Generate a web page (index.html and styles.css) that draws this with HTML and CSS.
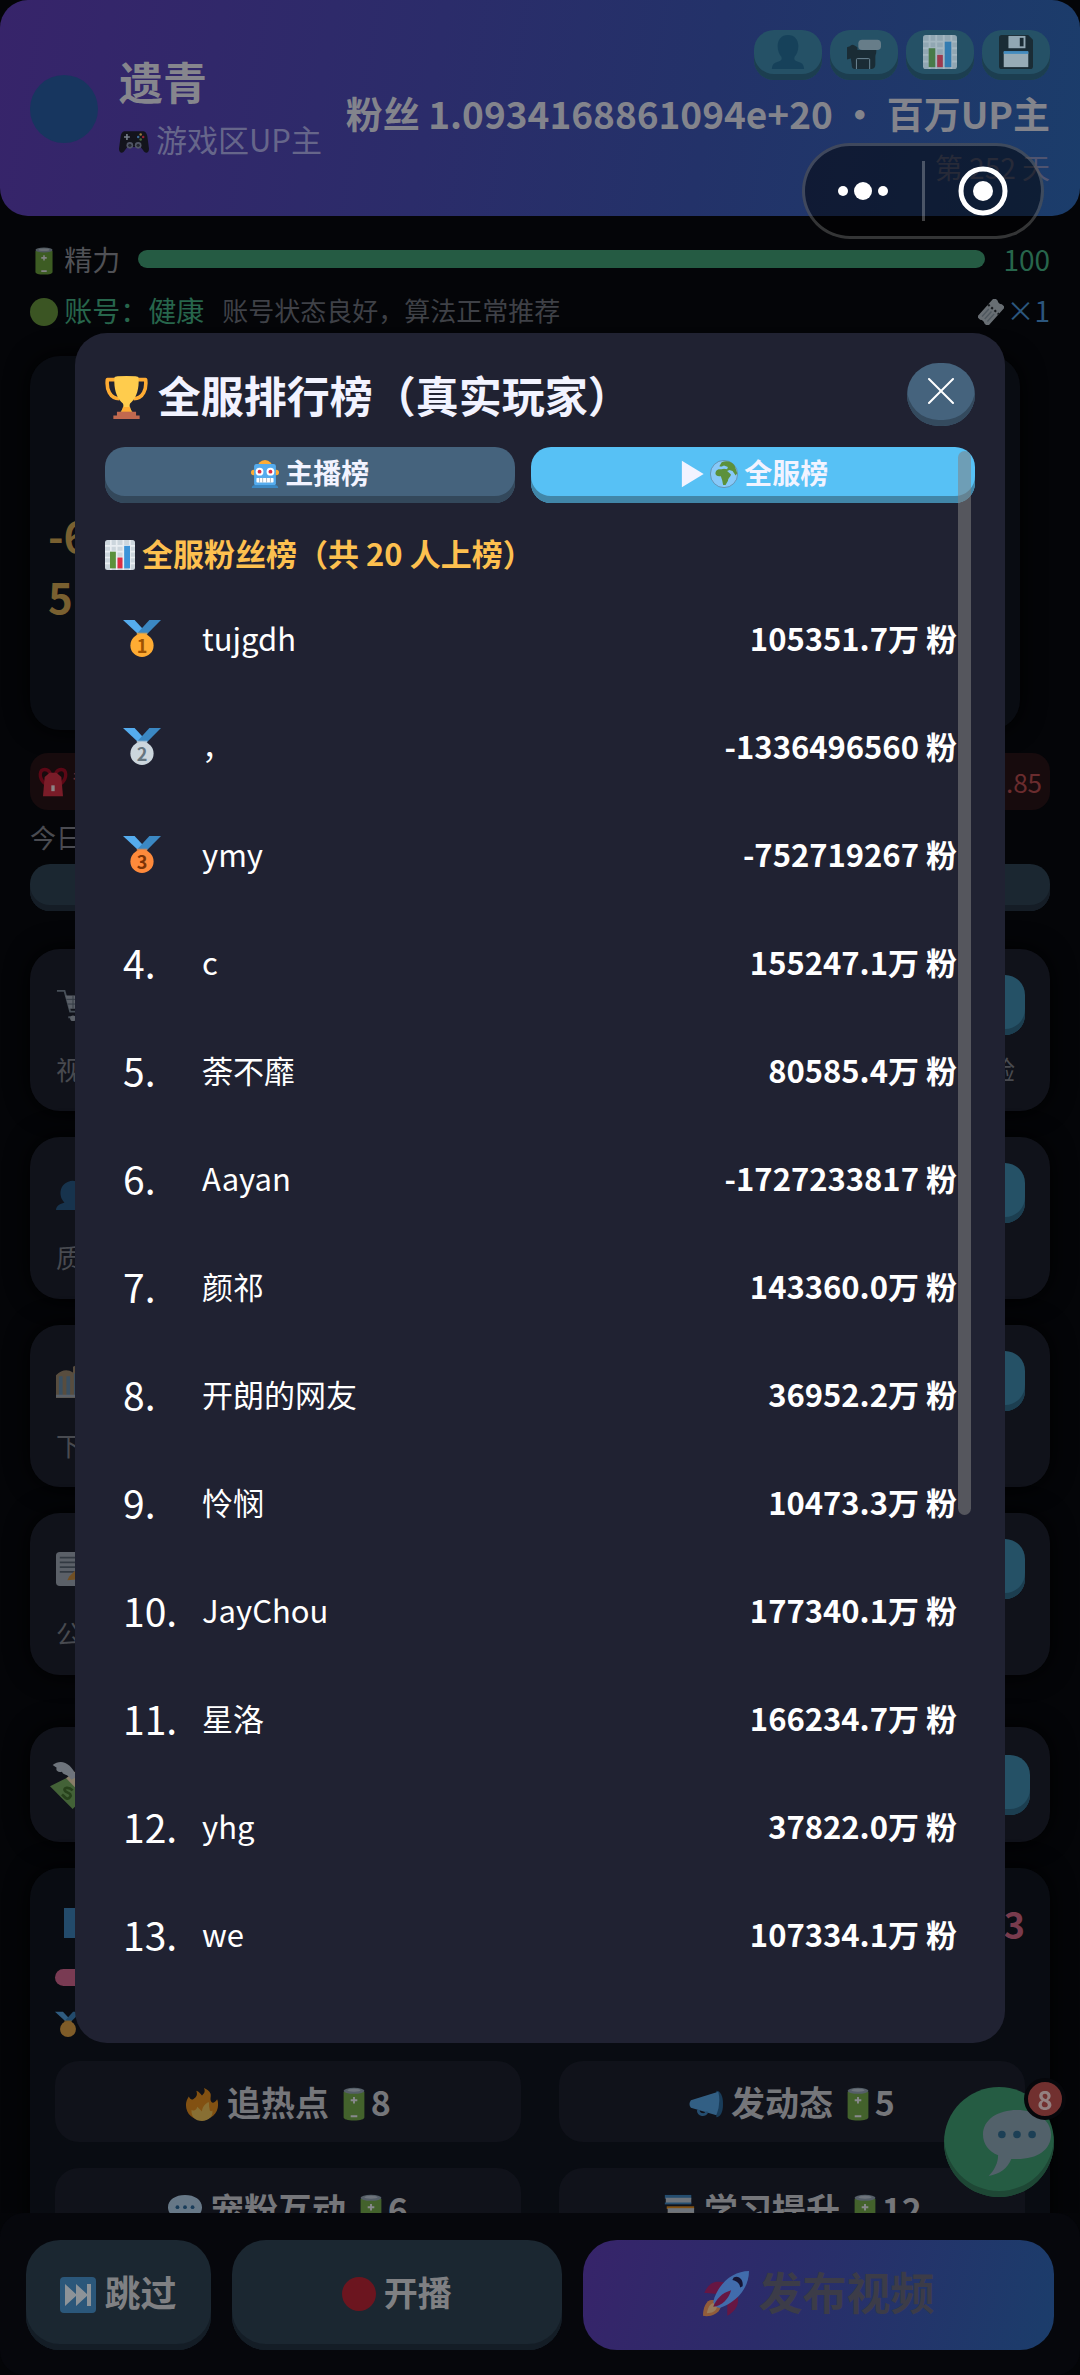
FILE: index.html
```html
<!DOCTYPE html>
<html lang="zh-CN">
<head>
<meta charset="utf-8">
<meta name="viewport" content="width=device-width, initial-scale=1">
<title>全服排行榜</title>
<link rel="stylesheet" href="styles.css">
</head>
<body>
<svg class="sprite" aria-hidden="true">
  <symbol id="battery" viewBox="0 0 36 36"><path fill="#77b23f" d="M7 5v27c0 2 4 3.500 11 3.500s11-1.500 11-3.500V5z"/><ellipse cx="18" cy="4" rx="11" ry="3.200" fill="#99aab5"/><ellipse cx="18" cy="3.500" rx="7" ry="1.600" fill="#ccd6dd"/><path stroke="#fff" stroke-width="2" d="M14.500 14h7M18 10.500v7M14.500 31h7"/></symbol>
  <symbol id="gamepad" viewBox="0 0 36 36"><path fill="#101214" d="M8 5h20c4 0 5 2 6 6l2 15c0 6-5 6-7 2l-3-4H10l-3 4c-2 4-7 4-7-2l2-15c1-4 2-6 6-6z"/><circle cx="13" cy="22" r="4" fill="#555c66"/><circle cx="23" cy="22" r="4" fill="#555c66"/><circle cx="13" cy="22" r="2" fill="#22262a"/><circle cx="23" cy="22" r="2" fill="#22262a"/><path stroke="#7c868d" stroke-width="2" d="M6 12h7M9.500 8.500v7"/><circle cx="26" cy="9" r="1.500" fill="#a5843a"/><circle cx="23" cy="12" r="1.500" fill="#3d7199"/><circle cx="29" cy="12" r="1.500" fill="#a0222f"/><circle cx="26" cy="15" r="1.500" fill="#4e753a"/></symbol>
  <symbol id="person" viewBox="0 0 36 36"><path fill="#0f3a55" d="M18 0c7 0 11 5 11 12 0 5-2 9-4 11-1 3 0 4 3 5 4 1 7 3 7 8H1c0-5 3-7 7-8 3-1 4-2 3-5-2-2-4-6-4-11C7 5 11 0 18 0z"/></symbol>
  <symbol id="camera" viewBox="0 0 36 36"><path fill="#15191c" d="M0 13l3-1q2-3 5-1l3 2v3h20v2c0 2-1 3-1 5v8c0 4-2 5-5 5H9c-3 0-4-1-4-5l-1-6-4 1z"/><rect x="12" y="5" width="24" height="11" rx="4" fill="#8b959c"/><path fill="none" stroke="#99aab5" d="M10 36V26q0-1 1-1h12q1 0 1 1v10"/></symbol>
  <symbol id="chart" viewBox="0 0 36 36"><rect width="36" height="36" rx="3" fill="#ccd6dd"/><path stroke="#e9eef2" stroke-width="2" d="M0 7h36M0 14h36M0 21h36M0 28h36M7 0v36M14 0v36M22 0v36M30 0v36"/><path fill="#5c913b" d="M6 14h7v20H6z"/><path fill="#dd2e44" d="M15 21h6v13h-6z"/><path fill="#3b94d9" d="M23 7h7v27h-7z"/></symbol>
  <symbol id="floppy" viewBox="0 0 36 36"><path fill="#15191c" d="M3 0h28l5 5v28q0 3-3 3H3q-3 0-3-3V3q0-3 3-3z"/><path fill="#ccd6dd" d="M10 1h18v13H10z"/><path fill="#15191c" d="M22 3h4v9h-4z"/><path fill="#d5dce1" d="M5 18h26v16H5z"/><path fill="#55acee" d="M5 17h26v3H5z"/></symbol>
  <symbol id="ticket" viewBox="0 0 36 36"><g transform="rotate(-48 18 18)"><path fill="#ccd6dd" d="M0 8h36v6q-3 4 0 8v6H0v-6q3-4 0-8z"/><path stroke="#292f33" stroke-width="3" stroke-dasharray="3 3" d="M23 8v20"/><path stroke="#99aab5" stroke-width="2" d="M5 13h14M5 18h14M5 23h14"/></g></symbol>
  <symbol id="trophy" viewBox="0 0 36 36"><path fill="none" stroke="#ffac33" stroke-width="3" stroke-linejoin="round" d="M9 3H2C1 11 4 19 12 19M27 3h7c1 8-2 16-10 16"/><path fill="#ffcc4d" d="M8 1q0-1 10-1t10 1c1 10-2 18-7 22-1 2 0 5 2 7H13c2-2 3-5 2-7C10 19 7 11 8 1z"/><path fill="#ffac33" d="M15 26h6l1 4h-8z"/><path fill="#c1694f" d="M10 30h16v3h3v3H7v-3h3z"/></symbol>
  <symbol id="robot" viewBox="0 0 36 36"><path fill="#ffac33" d="M10 4q8-8 16 0v5H10z"/><circle cx="3.500" cy="16" r="3.500" fill="#ffac33"/><circle cx="32.500" cy="16" r="3.500" fill="#ffac33"/><rect x="4" y="5" width="28" height="28" rx="3" fill="#55acee"/><path fill="#3b88c3" d="M1 36q0-4 5-4h24q5 0 5 4z"/><circle cx="11" cy="15" r="5" fill="#fff"/><circle cx="25" cy="15" r="5" fill="#fff"/><circle cx="11" cy="15" r="2.500" fill="#dd2e44"/><circle cx="25" cy="15" r="2.500" fill="#dd2e44"/><rect x="7" y="23" width="22" height="6" rx="1" fill="#fff"/><path stroke="#99aab5" d="M11 23v6M15 23v6M20 23v6M25 23v6"/></symbol>
  <symbol id="globe" viewBox="0 0 36 36"><circle cx="18" cy="18" r="17.500" fill="#88c9f9" stroke="#6188a5"/><path fill="#5c913b" d="M12 8l3-5c6-3 14-1 17 5l3 9-2 3-4-6-4-1-3 1c2 2 4 3 5 5-1 3-4 5-4 8l-3 5h-3c-1-3-1-6-2-8l-1-3c-3 0-6 0-7-3 0-3 1-5 4-6 3 0 5 0 7-1l-2-2z"/><path fill="#88c9f9" d="M14 9l4-2 5 2-1 3-6-1z"/></symbol>
  <symbol id="play" viewBox="0 0 36 36"><path fill="#f2f3ff" d="M5 1l28 17L5 35z"/></symbol>
  <symbol id="medal" viewBox="0 0 36 36"><path fill="#55acee" d="M0 1h11l12 13h-9z"/><path fill="#3b88c3" d="M36 1H25L14 13l7 3z"/><path fill="currentColor" opacity=".7" d="M13 13h10v4H13z"/><circle cx="18" cy="25" r="11" fill="currentColor"/></symbol>
  <symbol id="fire" viewBox="0 0 36 36"><path fill="#f4900c" d="M35 19c0-2 0-4-1-6-2 4-5 4-6 3-2-3 0-6-1-9-1-3-4-5-7-6 2 4 0 6-2 8-2-2-3-4-6-5 1 3 1 5-1 7-3 3-5 3-7-1-2 3-3 6-3 9 0 10 8 16 17 16s17-7 17-16z"/><path fill="#ffcc4d" d="M29 25c-1 1-3 1-3-2-1-3 0-5-1-7-4 2-7 6-7 10l-5-5c-1 4-4 5-6 3-1 7 4 12 11 12s12-5 11-11z"/></symbol>
  <symbol id="horn" viewBox="0 0 36 36"><path fill="#226699" d="M29 4c4 0 7 5 7 14s-3 14-7 14z"/><path fill="#55acee" d="M31 5L2 14q-3 4 0 8l27 8q5-13 2-25z"/><path fill="none" stroke="#3b88c3" stroke-width="3" d="M10 24c-1 6 8 7 9 2"/></symbol>
  <symbol id="bubble" viewBox="0 0 36 36"><path class="bubble-body" d="M18 1c10 0 18 5 18 13s-7 13-18 13h-3c-2 5-6 8-12 9 3-3 5-7 5-11-5-2-8-6-8-11C0 6 8 1 18 1z"/><g class="bubble-dots"><circle cx="10" cy="14" r="2"/><circle cx="18" cy="14" r="2"/><circle cx="26" cy="14" r="2"/></g></symbol>
  <symbol id="books" viewBox="0 0 36 36"><path fill="#3b88c3" d="M3 1h28v4H3z"/><path fill="#ccd6dd" d="M4 4h27v6H4z"/><path fill="#3b88c3" d="M3 9h28v2H3z"/><path fill="#f4900c" d="M5 13h29v3H5z"/><path fill="#ccd6dd" d="M6 15h28v6H6z"/><path fill="#f4900c" d="M5 20h29v3H5z"/><path fill="#77b255" d="M2 25h29v10H2z"/></symbol>
  <symbol id="skip" viewBox="0 0 36 36"><rect width="36" height="36" rx="4" fill="#3b88c3"/><path fill="#fff" d="M5 7l12 11L5 29zM16 7l12 11-12 11zM27 7h4v22h-4z"/></symbol>
  <symbol id="rocket" viewBox="0 0 36 36"><path fill="#a0041e" d="M1 17c5-10 10-9 16-8l-6 9zM19 35c9-5 9-11 8-16l-8 6z"/><path fill="#f4900c" d="M9 23c-6-2-9 5-9 12 4 1 12 0 14-7z"/><path fill="#ffcc4d" d="M9 25c-4 0-5 4-6 8 4 0 7-1 8-5z"/><path fill="#55acee" d="M36 0C24 0 12 9 8 24q1 4 5 5C27 24 36 13 36 0z"/><path fill="#000" d="M24 5c4-2 8 2 7 7l-2 1c0-3-2-5-6-6z"/><path fill="#a0041e" d="M8 28c2-6 7-11 14-13-2 7-7 12-14 13z"/></symbol>
  <symbol id="backpack" viewBox="0 0 36 36"><path fill="none" stroke="#a0041e" stroke-width="4" d="M8 20C0 12 2 3 8 3s8 6 7 9M28 20c8-8 6-17 0-17s-8 6-7 9"/><path fill="#dd2e44" d="M8 12l6-5h8l6 5 2 23H6z"/><path fill="#fff" d="M16 22h4v7h-4z"/></symbol>
  <symbol id="cart" viewBox="0 0 36 36"><path fill="none" stroke="#99aab5" stroke-width="2" d="M1 3h8l6 22h18M13 31h19"/><path fill="#ccd6dd" d="M10 8h26l-4 14H14z"/><path stroke="#66757f" d="M11 12h24M12 17h22M18 8v14M24 8v14M30 8v14"/><circle cx="18" cy="32" r="3" fill="#ccd6dd"/></symbol>
  <symbol id="people" viewBox="0 0 36 36"><path fill="#269" d="M13 6c8-3 14 2 13 10-1 5-3 7-2 10h12v10H0c0-5 6-7 9-8-7-7-5-19 4-22z"/><circle cx="29" cy="6" r="6" fill="#66a6d0"/></symbol>
  <symbol id="bank" viewBox="0 0 36 36"><path fill="#c5a676" d="M0 12q9-9 18-3V3l6-3h12v36H0z"/><path stroke="#79aacb" stroke-width="4" d="M5 13v20M13 13v20M21 10v23M29 8v25"/><path stroke="#ccd6dd" stroke-width="3" d="M0 34h36"/></symbol>
  <symbol id="memo" viewBox="0 0 36 36"><rect width="34" height="36" rx="4" fill="#ccd6dd"/><path stroke="#66757f" stroke-width="2" d="M4 6h26M4 11h26M4 16h26M4 21h20"/><path fill="#ffac33" d="M14 26L28 12l8 6-15 11-9 1z"/></symbol>
  <symbol id="money" viewBox="0 0 36 36"><path fill="#77b255" d="M0 19l12-6 16 12-11 11z"/><path fill="#ffe8b6" d="M12 13l8-6 12 14-6 6z"/><path fill="#ccd6dd" d="M2 3C8-2 16 1 20 12l-4 2c-3-5-6-3-7-6-3 1-5-1-4-3z"/><path fill="none" stroke="#3e721d" stroke-width="2" d="M17 22c-3-3-7-2-6 0s6 2 4 5-4 0-6-2"/></symbol>
</svg>

<div class="app">
  <header class="top">
    <div class="avatar"></div>
    <div class="who">
      <h1>遗青</h1>
      <p><svg class="e30"><use href="#gamepad"/></svg> 游戏区UP主</p>
    </div>
    <div class="stats">
      <div class="tools">
        <button class="key" aria-label="个人"><svg><use href="#person"/></svg></button>
        <button class="key" aria-label="直播"><svg><use href="#camera"/></svg></button>
        <button class="key" aria-label="排行"><svg><use href="#chart"/></svg></button>
        <button class="key" aria-label="存档"><svg><use href="#floppy"/></svg></button>
      </div>
      <p class="fans">粉丝 1.0934168861094e+20 · 百万UP主</p>
      <p class="day">第 252 天</p>
    </div>
  </header>

  <main class="page">
    <div class="line energy">
      <span class="label"><svg class="e28"><use href="#battery"/></svg> 精力</span>
      <div class="track"></div>
      <span class="good">100</span>
    </div>
    <div class="line account">
      <span class="good label"><i class="dot green"></i> 账号：健康</span>
      <span class="note">账号状态良好，算法正常推荐</span>
      <span class="coupon"><svg><use href="#ticket"/></svg>×1</span>
    </div>
    <section class="card money"><span>-6</span><span>5</span></section>
    <div class="alert"><svg class="e30"><use href="#backpack"/></svg><span>背</span><span class="amount">.85</span></div>
    <p class="today">今日</p>
    <button class="wide" aria-label="今日"></button>

    <section class="features">
      <article class="card feature"><div><svg><use href="#cart"/></svg><button class="key" aria-label="视"></button></div><p><span>视</span><span>验</span></p></article>
      <article class="card feature"><div><svg><use href="#people"/></svg><button class="key" aria-label="质"></button></div><p><span>质</span></p></article>
      <article class="card feature"><div><svg><use href="#bank"/></svg><button class="key" aria-label="下"></button></div><p><span>下</span></p></article>
      <article class="card feature"><div><svg><use href="#memo"/></svg><button class="key" aria-label="公"></button></div><p><span>公</span></p></article>
    </section>
    <section class="card cash"><svg><use href="#money"/></svg><button class="key" aria-label="资金"></button></section>

    <section class="card actions">
      <div class="actions-head"><i></i><b>3</b></div>
      <div class="heat"></div>
      <svg class="badge-icon"><use href="#medal"/></svg>
      <div class="grid">
        <button><svg><use href="#fire"/></svg> 追热点 <svg><use href="#battery"/></svg>8</button>
        <button><svg><use href="#horn"/></svg> 发动态 <svg><use href="#battery"/></svg>5</button>
        <button><svg><use href="#bubble"/></svg> 宠粉互动 <svg><use href="#battery"/></svg>6</button>
        <button><svg><use href="#books"/></svg> 学习提升 <svg><use href="#battery"/></svg>12</button>
      </div>
    </section>
  </main>

  <footer class="dock">
    <button class="skip"><svg><use href="#skip"/></svg> 跳过</button>
    <button class="live"><i class="dot red"></i> 开播</button>
    <button class="publish"><svg><use href="#rocket"/></svg> 发布视频</button>
  </footer>
</div>

<button class="fab" aria-label="消息"><svg><use href="#bubble"/></svg><span>8</span></button>

<div class="overlay">
  <section class="modal" role="dialog" aria-labelledby="rank-title">
    <header class="modal-head">
      <h2 id="rank-title"><svg><use href="#trophy"/></svg> 全服排行榜（真实玩家）</h2>
      <button class="close" aria-label="关闭"><svg viewBox="0 0 28 28"><path d="M2 2l24 24M26 2L2 26"/></svg></button>
    </header>
    <div class="scroll">
      <div class="tabs">
        <button><svg><use href="#robot"/></svg> 主播榜</button>
        <button class="on"><svg><use href="#play"/></svg><svg><use href="#globe"/></svg> 全服榜</button>
      </div>
      <h3><svg><use href="#chart"/></svg> 全服粉丝榜（共 20 人上榜）</h3>
      <ol class="ranks">
        <li><span class="medal gold"><svg><use href="#medal"/></svg><b>1</b></span><span>tujgdh</span><strong>105351.7万 粉</strong></li>
        <li><span class="medal silver"><svg><use href="#medal"/></svg><b>2</b></span><span>，</span><strong>-1336496560 粉</strong></li>
        <li><span class="medal bronze"><svg><use href="#medal"/></svg><b>3</b></span><span>ymy</span><strong>-752719267 粉</strong></li>
        <li><span class="no">4.</span><span>c</span><strong>155247.1万 粉</strong></li>
        <li><span class="no">5.</span><span>荼不靡</span><strong>80585.4万 粉</strong></li>
        <li><span class="no">6.</span><span>Aayan</span><strong>-1727233817 粉</strong></li>
        <li><span class="no">7.</span><span>颜祁</span><strong>143360.0万 粉</strong></li>
        <li><span class="no">8.</span><span>开朗的网友</span><strong>36952.2万 粉</strong></li>
        <li><span class="no">9.</span><span>怜悯</span><strong>10473.3万 粉</strong></li>
        <li><span class="no">10.</span><span>JayChou</span><strong>177340.1万 粉</strong></li>
        <li><span class="no">11.</span><span>星洛</span><strong>166234.7万 粉</strong></li>
        <li><span class="no">12.</span><span>yhg</span><strong>37822.0万 粉</strong></li>
        <li><span class="no">13.</span><span>we</span><strong>107334.1万 粉</strong></li>
      </ol>
      <div class="thumb"></div>
    </div>
  </section>
</div>

<nav class="capsule">
  <button aria-label="更多"><svg viewBox="0 0 52 52"><circle cx="6" cy="26" r="5"/><circle cx="26" cy="26" r="9"/><circle cx="46" cy="26" r="5"/></svg></button>
  <button aria-label="退出"><svg viewBox="0 0 52 52"><circle cx="26" cy="26" r="22" class="ring"/><circle cx="26" cy="26" r="10"/></svg></button>
</nav>
</body>
</html>
```
FILE: styles.css
```css
* { box-sizing: border-box; }
html, body { height: 100%; }
body {
  margin: 0;
  background: #000;
  color: #7a7b80;
  font-family: "Noto Sans CJK SC", "Noto Sans", sans-serif;
  font-size: 28px;
  line-height: 40px;
}
h1, h2, h3, p, ol { margin: 0; padding: 0; }
button { border: 0; padding: 0; color: inherit; font: inherit; }
svg { display: inline-block; flex: none; }
.sprite { position: absolute; width: 0; height: 0; }
.e28 { width: 28px; height: 28px; vertical-align: -4px; }
.e30 { width: 30px; height: 30px; vertical-align: -5px; }
.bubble-body { fill: var(--bubble, #bdddf4); }
.bubble-dots { fill: var(--dots, #269); }

.app { height: 100vh; display: flex; flex-direction: column; background: #040508; overflow: hidden; }
.app svg { opacity: .5; }

/* profile bar */
.top {
  flex: none;
  display: flex;
  align-items: center;
  padding: 30px 30px 28px;
  border-radius: 28px;
  background: linear-gradient(100deg, #37246a 0%, #2b2c6a 40%, #233269 65%, #1b3d6b 100%);
}
.avatar { width: 68px; height: 68px; border-radius: 50%; background: #17365f; }
.who { margin-left: 21px; }
.who h1 { font-size: 44px; line-height: 60px; color: #86868d; }
.who p { font-size: 31px; line-height: 56px; color: #66668a; white-space: nowrap; }
.who svg { opacity: .9; }
.stats { margin-left: auto; text-align: right; white-space: nowrap; }
.tools { display: flex; justify-content: flex-end; gap: 8px; }
.key {
  display: flex;
  justify-content: center;
  align-items: center;
  width: 68px;
  height: 50px;
  padding-bottom: 6px;
  border-radius: 20px;
  background: #255166;
  box-shadow: inset 0 -6px #1c3e50;
}
.tools svg { width: 34px; height: 34px; opacity: .65; }
.fans { margin-top: 8px; font-size: 37px; line-height: 50px; font-weight: 700; color: #83848c; }
.day { margin-top: 8px; font-size: 28px; line-height: 42px; color: #4f5470; }

/* page body */
.page { flex: 1; min-height: 0; overflow: hidden; display: flex; flex-direction: column; padding: 23px 30px 0; }
.page > * { flex: none; }
.line { display: flex; align-items: center; white-space: nowrap; }
.label { color: #505156; }
.account .label { color: #27664c; }
.energy { gap: 18px; }
.track { flex: 1; height: 18px; border-radius: 9px; background: #255b43; }
.good { color: #27664c; }
.account { margin-top: 11px; }
.note { margin-left: 18px; font-size: 26px; color: #3f4147; }
.coupon { margin-left: auto; color: #2b567d; }
.coupon svg { width: 26px; height: 26px; margin-right: 2px; vertical-align: -3px; }
.dot { display: inline-block; border-radius: 50%; }
.green { width: 28px; height: 28px; vertical-align: -4px; background: #3b5523; }
.red { width: 34px; height: 34px; vertical-align: -5px; background: #6c151f; }

.card { border-radius: 30px; background: #10121a; box-shadow: 0 0 24px #000; }
.money { display: flex; flex-direction: column; height: 374px; margin: 26px 30px 0 0; padding: 148px 18px 0; background: #090c12; font-size: 42px; line-height: 61px; font-weight: 700; color: #796030; }
.alert { display: flex; align-items: center; height: 57px; margin-top: 23px; padding: 0 8px; border-radius: 18px; background: #170b0d; font-size: 26px; color: #6a2c2e; }
.alert span { margin-left: 4px; }
.alert .amount { margin-left: auto; }
.today { margin-top: 7px; font-size: 26px; color: #4a4b51; }
.wide { height: 47px; margin-top: 7px; border-radius: 20px; background: #1b2731; box-shadow: inset 0 -6px #151d26; }

.features { display: flex; flex-direction: column; gap: 26px; margin-top: 38px; }
.feature { padding: 26px 25px 22px 26px; }
.feature div, .feature p, .cash { display: flex; align-items: center; justify-content: space-between; }
.feature svg { width: 34px; height: 34px; opacity: .4; }
.feature .key, .cash .key { width: 120px; height: 60px; }
.feature p { margin-top: 14px; padding-right: 10px; font-size: 26px; color: #484a50; }
.cash { margin-top: 52px; height: 115px; padding: 0 20px; }
.cash svg { width: 48px; height: 48px; }

.actions { margin-top: 26px; padding: 31px 25px 0; background: #090c12; }
.actions-head { display: flex; justify-content: space-between; align-items: center; padding-left: 9px; font-size: 36px; line-height: 48px; color: #783b4d; }
.actions-head i { width: 30px; height: 30px; background: #234b6b; }
.heat { width: 60%; height: 17px; margin-top: 22px; border-radius: 9px; background: #793b53; }
.badge-icon { display: block; width: 26px; height: 26px; margin-top: 25px; color: #f4ac3f; }
.grid { display: grid; grid-template-columns: 1fr 1fr; gap: 26px 38px; margin-top: 24px; }
.grid button { height: 81px; border-radius: 24px; background: #10121a; font-size: 34px; font-weight: 700; color: #75767a; white-space: nowrap; }
.grid svg { width: 34px; height: 34px; vertical-align: -5px; }

/* bottom dock */
.dock { flex: none; display: grid; grid-template-columns: 185fr 330fr 471fr; gap: 21px; padding: 27px 26px 25px; border-radius: 24px; background: #06070c; }
.dock button { height: 110px; padding-bottom: 6px; border-radius: 34px; background: #1b2731; box-shadow: inset 0 -6px #141d26; font-weight: 700; color: #7f8083; white-space: nowrap; }
.dock .skip { font-size: 36px; }
.dock .live { font-size: 34px; }
.dock .publish { padding-bottom: 2px; font-size: 44px; color: #3c3c48; background: linear-gradient(105deg, #37246a, #2b2c6a 40%, #1b3d6b); box-shadow: none; }
.skip svg { width: 36px; height: 36px; vertical-align: -6px; }
.publish svg { width: 46px; height: 46px; vertical-align: -7px; }

.fab { --bubble: #52616a; --dots: #1c3f55; position: fixed; right: 26px; bottom: 178px; width: 110px; height: 110px; border-radius: 50%; background: #255c43; box-shadow: inset 0 -6px #1e4735; }
.fab svg { position: absolute; left: 39px; top: 21px; width: 68px; height: 68px; }
.fab span { position: absolute; right: -12px; top: -9px; width: 42px; height: 42px; border: 4px solid #06070b; border-radius: 50%; background: #71302f; color: #938080; font-size: 26px; line-height: 34px; font-weight: 700; }

/* ranking dialog */
.overlay { position: fixed; inset: 0; display: flex; align-items: center; justify-content: center; padding: 0 75px; }
.modal { display: flex; flex-direction: column; width: 100%; height: 72%; padding: 30px; border-radius: 32px; background: #202232; color: #f2f3ff; }
.modal-head { display: flex; align-items: center; justify-content: space-between; }
.modal-head h2 { font-size: 43px; line-height: 62px; white-space: nowrap; }
.modal-head svg { width: 43px; height: 43px; vertical-align: -6px; }
.close { display: flex; align-items: center; justify-content: center; width: 68px; height: 63px; padding-bottom: 6px; border-radius: 34px; background: #45637d; box-shadow: inset 0 -6px #344a5e; }
.modal-head .close svg { width: 28px; height: 28px; fill: none; stroke: #fff; stroke-width: 2; stroke-linecap: round; }
.scroll { position: relative; flex: 1; min-height: 0; margin-top: 21px; overflow: hidden; }
.tabs { display: flex; gap: 16px; }
.tabs button { flex: 410; height: 56px; padding-bottom: 6px; border-radius: 20px; background: #45637d; box-shadow: inset 0 -7px #33485b; font-weight: 700; }
.tabs .on { flex: 444; background: #57c1f5; box-shadow: inset 0 -7px #4186a8; }
.tabs svg { width: 28px; height: 28px; vertical-align: -4px; }
.tabs svg + svg { margin-left: 4px; }
.scroll h3 { margin-top: 28px; font-size: 31px; line-height: 44px; color: #fdc04f; }
.scroll h3 svg { width: 30px; height: 30px; vertical-align: -4px; }
.ranks { list-style: none; margin-top: 9px; color: #fff; font-size: 31px; }
.ranks li { display: grid; grid-template-columns: 79px 1fr auto; align-items: center; height: 108px; padding: 0 18px; }
.no { font-size: 39px; white-space: nowrap; }
.medal { position: relative; width: 38px; height: 38px; }
.medal svg { display: block; width: 38px; height: 38px; }
.medal b { position: absolute; left: 0; right: 0; top: 16px; font-size: 18px; line-height: 20px; text-align: center; }
.gold { color: #ffac33; }
.gold b { color: #9e5200; }
.silver { color: #ccd6dd; }
.silver b { color: #66757f; }
.bronze { color: #ff8a3b; }
.bronze b { color: #7c3306; }
.thumb { position: absolute; top: 4px; right: 4px; width: 13px; height: 68%; border-radius: 7px; background: rgba(130, 130, 130, .55); }

/* system capsule */
.capsule { position: fixed; top: 143px; right: 36px; display: flex; width: 242px; height: 96px; padding: 15px 0; border: 3px solid rgba(255, 255, 255, .2); border-radius: 48px; background: rgba(0, 0, 0, .5); }
.capsule button { flex: 1; display: flex; align-items: center; justify-content: center; background: none; }
.capsule button + button { border-left: 3px solid rgba(255, 255, 255, .25); }
.capsule svg { width: 52px; height: 52px; fill: #fff; }
.capsule .ring { fill: none; stroke: #fff; stroke-width: 5; }
```
